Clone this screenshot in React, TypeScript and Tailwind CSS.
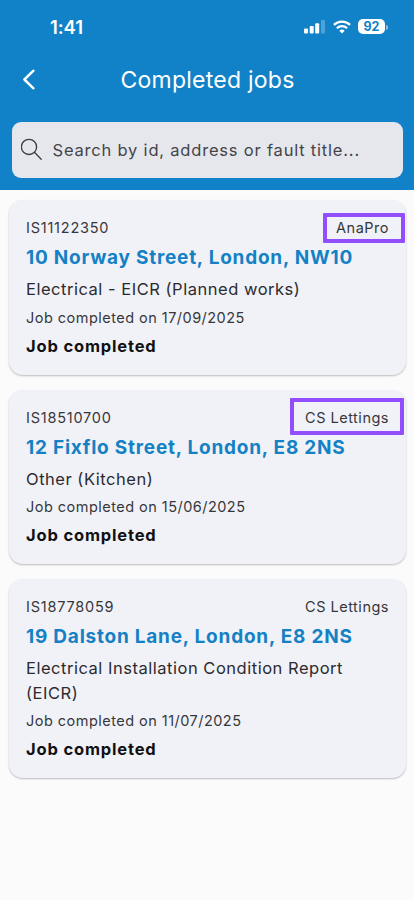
import { useMemo, useState } from 'react'

type Job = {
  id: string
  agency: string
  address: string
  title: string
  completedOn: string
  highlight?: string
}

const JOBS: Job[] = [
  {
    id: 'IS11122350',
    agency: 'AnaPro',
    address: '10 Norway Street, London, NW10',
    title: 'Electrical - EICR (Planned works)',
    completedOn: '17/09/2025',
    highlight: '-top-[4px] -left-[13px] -right-[16px] h-[30px]',
  },
  {
    id: 'IS18510700',
    agency: 'CS Lettings',
    address: '12 Fixflo Street, London, E8 2NS',
    title: 'Other (Kitchen)',
    completedOn: '15/06/2025',
    highlight: '-top-[8.5px] -left-[15px] -right-[15px] h-[37px]',
  },
  {
    id: 'IS18778059',
    agency: 'CS Lettings',
    address: '19 Dalston Lane, London, E8 2NS',
    title: 'Electrical Installation Condition Report (EICR)',
    completedOn: '11/07/2025',
  },
]

function StatusBar() {
  return (
    <div className="flex h-[54px] items-center justify-between pr-[26.5px] pl-[50px] text-white">
      <span className="text-[18.5px] leading-6 font-semibold tracking-[-0.1px]">1:41</span>
      <div className="flex items-center">
        <svg width="21" height="14" viewBox="0 0 21 14" fill="currentColor">
          <rect x="0" y="8.5" width="4" height="5" rx="1" />
          <rect x="5.7" y="6" width="4" height="7.5" rx="1" />
          <rect x="11.2" y="3.2" width="4" height="10.3" rx="1" />
          <rect x="17" y="0" width="4" height="13.5" rx="1" opacity="0.25" />
        </svg>
        <svg className="ml-2" width="18" height="14" viewBox="0 0 18 14" fill="none" stroke="currentColor" strokeWidth="2.3">
          <path d="M0.9 4.9a11.6 11.6 0 0 1 16.2 0" />
          <path d="M3.9 8.2a7.3 7.3 0 0 1 10.2 0" />
          <path d="M9 13.5 6.3 10.7a3.9 3.9 0 0 1 5.4 0Z" fill="currentColor" stroke="none" />
        </svg>
        <div className="mb-px ml-[7.5px] flex h-[15px] w-[27px] items-center justify-center rounded-[5px] bg-white pt-px text-[12.5px] leading-none font-bold text-[#1182c7]">
          92
        </div>
        <div className="ml-px h-[5px] w-[1.5px] rounded-r-full bg-white/50" />
      </div>
    </div>
  )
}

function JobCard({ job }: { job: Job }) {
  return (
    <article className="rounded-[14px] bg-[#f1f2f7] px-[17px] pt-[17px] pb-[17px] shadow-[0_1px_2px_rgba(0,0,0,0.25)]">
      <div className="flex justify-between text-[14.5px] leading-[22px] text-[#37373b]">
        <span className="tracking-[0.78px]">{job.id}</span>
        <span className="relative tracking-[0.5px]">
          {job.agency}
          {job.highlight && (
            <span className={`absolute rounded-[1px] border-4 border-[#924dff] ${job.highlight}`} />
          )}
        </span>
      </div>
      <h2 className="mt-[5px] text-[19px] leading-7 font-[650] tracking-[0.77px] text-[#1581c5]">{job.address}</h2>
      <p className="mt-[5px] text-[16.5px] leading-[24.5px] tracking-[0.52px] text-[#2b2b2f]">{job.title}</p>
      <p className="mt-1.5 text-[14.5px] leading-5 tracking-[0.47px] text-[#37373b]">Job completed on {job.completedOn}</p>
      <p className="mt-1.5 text-[16.5px] leading-6 font-bold tracking-[0.83px] text-[#111114]">Job completed</p>
    </article>
  )
}

function App() {
  const [query, setQuery] = useState('')

  const jobs = useMemo(() => {
    const term = query.trim().toLowerCase()
    return JOBS.filter((job) => `${job.id} ${job.address} ${job.title}`.toLowerCase().includes(term))
  }, [query])

  return (
    <div className="min-h-screen w-full bg-[#fbfbfb] font-['Inter',sans-serif]">
      <header className="h-[190px] bg-[#1182c7]">
        <StatusBar />
        <div className="flex h-[52px] items-center pl-[22px] text-white">
          <button type="button" aria-label="Back" className="mb-0.5 w-[15px]">
            <svg width="14" height="21" viewBox="0 0 15 22" fill="none" stroke="currentColor" strokeWidth="2.6">
              <path d="M12.3 1.6 2.5 11l9.8 9.4" strokeLinecap="round" strokeLinejoin="round" />
            </svg>
          </button>
          <h1 className="flex-1 pr-[36px] text-center text-[23px] tracking-[0.25px]">Completed jobs</h1>
        </div>
        <label className="mx-[11.5px] mt-4 flex h-14 items-center rounded-[9px] bg-[#e6e7ed] pl-[9px]">
          <svg className="mb-0.5" width="22" height="23" viewBox="0 0 22 23" fill="none" stroke="#3b3b40" strokeWidth="1.3" strokeLinecap="round">
            <circle cx="8" cy="8.9" r="7.6" />
            <path d="M13.4 14.3 20.2 21.2" />
          </svg>
          <input
            value={query}
            onChange={(event) => setQuery(event.target.value)}
            placeholder="Search by id, address or fault title..."
            className="ml-2.5 flex-1 bg-transparent text-[16.5px] tracking-[0.8px] text-[#3b3b40] outline-none placeholder:text-[#444449]"
          />
        </label>
      </header>
      <main className="flex flex-col gap-[15px] pt-2.5 pr-2 pl-[9px]">
        {jobs.map((job) => (
          <JobCard key={job.id} job={job} />
        ))}
      </main>
    </div>
  )
}

export default App
